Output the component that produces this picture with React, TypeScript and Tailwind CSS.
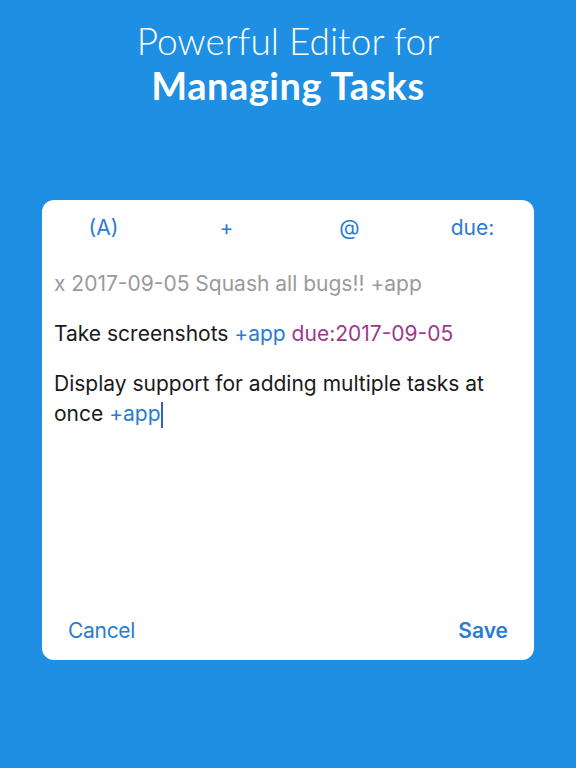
import React from 'react';

const tokens = ['(A)', '+', '@', 'due:'];

export default function App() {
  return (
    <div className="w-[576px] h-[768px] bg-[#1e8fe2] flex flex-col items-center" style={{ fontFamily: 'Inter, "Noto Sans", sans-serif' }}>
      <div className="pt-[18px] text-white text-center leading-[45px]" style={{ fontFamily: 'Lato, sans-serif' }}>
        <div className="font-light text-[37px]">Powerful Editor for</div>
        <div className="font-bold text-[38px] tracking-[0.5px]">Managing Tasks</div>
      </div>

      <div className="mt-[92px] w-[492px] h-[460px] bg-white rounded-[12px] flex flex-col">
        <div className="grid grid-cols-4 pt-[13px] text-[21px] leading-[30px] text-[#2a7bd2] text-center">
          {tokens.map((t) => (
            <div key={t}>{t}</div>
          ))}
        </div>

        <div className="px-[12px] pt-[26px] text-[21px] leading-[30px] text-[#1a1a1a] flex-1">
          <p className="text-[#9a9a9a]">x 2017-09-05 Squash all bugs!! +app</p>
          <p className="mt-[20px]">
            Take screenshots <span className="text-[#2a7bd2]">+app</span>{' '}
            <span className="text-[#9c3a8c]">due:2017-09-05</span>
          </p>
          <div className="mt-[20px]">
            <p>Display support for adding multiple tasks at</p>
            <p>
              once <span className="text-[#2a7bd2]">+app</span>
              <span className="inline-block w-[2px] h-[26px] bg-[#2f5fd8] align-middle" />
            </p>
          </div>
        </div>

        <div className="flex justify-between px-[26px] pb-[14px] text-[21px] leading-[30px] text-[#2a7bd2]">
          <span className="tracking-[-0.3px]">Cancel</span>
          <span className="font-semibold">Save</span>
        </div>
      </div>
    </div>
  );
}
